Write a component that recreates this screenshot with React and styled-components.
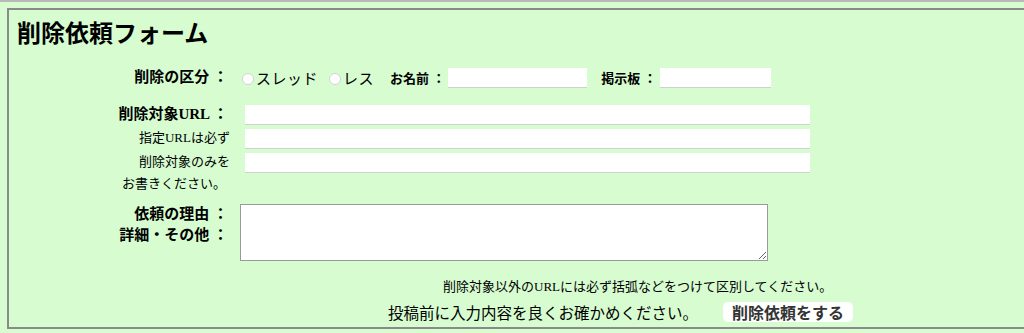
import React from 'react';
import styled, { createGlobalStyle } from 'styled-components';

const GlobalStyle = createGlobalStyle`
  html, body {
    margin: 0;
    padding: 0;
    overflow: hidden;
    background: #d6fcd0;
  }
  body {
    font-family: 'Liberation Serif', 'Noto Sans CJK JP', serif;
    color: #000;
  }
`;

const TopRule = styled.div`
  height: 2px;
  background: #b9b9b9;
`;

const Box = styled.form`
  margin: 6px 0 0 7px;
  width: 1100px;
  height: 317px;
  border: 2px solid #8a8a8a;
  padding: 0;
  box-sizing: content-box;
`;

const Title = styled.h2`
  margin: 8px 0 0 8px;
  font-size: 24px;
  line-height: 32px;
  font-weight: bold;
`;

const Row = styled.div`
  display: flex;
  align-items: ${({ $top }) => ($top ? 'flex-start' : 'center')};
  height: ${({ $h }) => $h}px;
  margin-top: ${({ $mt }) => $mt || 0}px;
`;

const Label = styled.div`
  width: ${({ $w }) => $w || 219}px;
  flex-shrink: 0;
  text-align: right;
  font-weight: ${({ $small }) => ($small ? 'normal' : 'bold')};
  font-size: ${({ $small }) => ($small ? 13 : 15)}px;
  line-height: ${({ $lh }) => $lh || 20}px;
`;

const Radio = styled.input.attrs({ type: 'radio', name: 'kind' })`
  appearance: none;
  width: 12px;
  height: 12px;
  margin: 3px 2px 0 ${({ $ml }) => $ml}px;
  border: 1px solid #d4d4d4;
  border-radius: 50%;
  background: #fff;
  box-sizing: border-box;
`;

const Choice = styled.span`
  font-size: 15px;
  letter-spacing: 0.5px;
`;

const SmallLabel = styled.span`
  font-size: 13px;
  font-weight: bold;
  margin-left: ${({ $ml }) => $ml}px;
  margin-right: 3px;
`;

const TextBox = styled.input.attrs({ type: 'text' })`
  width: ${({ $w }) => $w}px;
  height: 19px;
  margin-left: ${({ $ml }) => $ml || 0}px;
  border: none;
  padding: 0;
  background: #fff;
  box-shadow: 0 1px 0 #d0d0d0;
  outline: none;
`;

const Note = styled.div`
  font-size: 13px;
  line-height: 20px;
  padding-left: ${({ $pl }) => $pl}px;
  margin-top: ${({ $mt }) => $mt || 0}px;
`;

const Reason = styled.textarea`
  width: 528px;
  height: 57px;
  margin: 0 0 0 ${({ $ml }) => $ml}px;
  border: 1px solid #9a9a9a;
  box-sizing: border-box;
  background: #fff;
  resize: both;
`;

const Submit = styled.div`
  display: flex;
  align-items: center;
  height: 22px;
  margin: 4px 0 0 379px;
`;

const Confirm = styled.span`
  font-size: 15.5px;
`;

const Button = styled.button`
  margin-left: 25px;
  height: 20px;
  padding: 0 9px;
  border: none;
  border-radius: 5px;
  background: #fff;
  color: #333;
  font-family: 'Noto Sans CJK JP', sans-serif;
  font-size: 16px;
  font-weight: bold;
  line-height: 20px;
`;

export default function App() {
  return (
    <>
      <GlobalStyle />
      <TopRule />
      <Box>
        <Title>削除依頼フォーム</Title>

        <Row $h={24} $mt={15}>
          <Label>削除の区分 ：</Label>
          <Radio $ml={14} />
          <Choice>スレッド</Choice>
          <Radio $ml={11} />
          <Choice>レス</Choice>
          <SmallLabel $ml={16}>お名前 ：</SmallLabel>
          <TextBox $w={139} />
          <SmallLabel $ml={14}>掲示板 ：</SmallLabel>
          <TextBox $w={111} />
        </Row>

        <Row $h={24} $mt={13}>
          <Label>削除対象URL ：</Label>
          <TextBox $w={565} $ml={17} />
        </Row>
        <Row $h={24}>
          <Label $small $w={221}>指定URLは必ず</Label>
          <TextBox $w={565} $ml={15} />
        </Row>
        <Row $h={24}>
          <Label $small $w={221}>削除対象のみを</Label>
          <TextBox $w={565} $ml={15} />
        </Row>
        <Note $pl={113}>お書きください。</Note>

        <Row $h={57} $mt={10} $top>
          <Label $lh={21}>
            依頼の理由 ：<br />
            詳細・その他 ：
          </Label>
          <Reason $ml={12} />
        </Row>

        <Note $pl={434} $mt={16}>
          削除対象以外のURLには必ず括弧などをつけて区別してください。
        </Note>

        <Submit>
          <Confirm>投稿前に入力内容を良くお確かめください。</Confirm>
          <Button type="button">削除依頼をする</Button>
        </Submit>
      </Box>
    </>
  );
}
